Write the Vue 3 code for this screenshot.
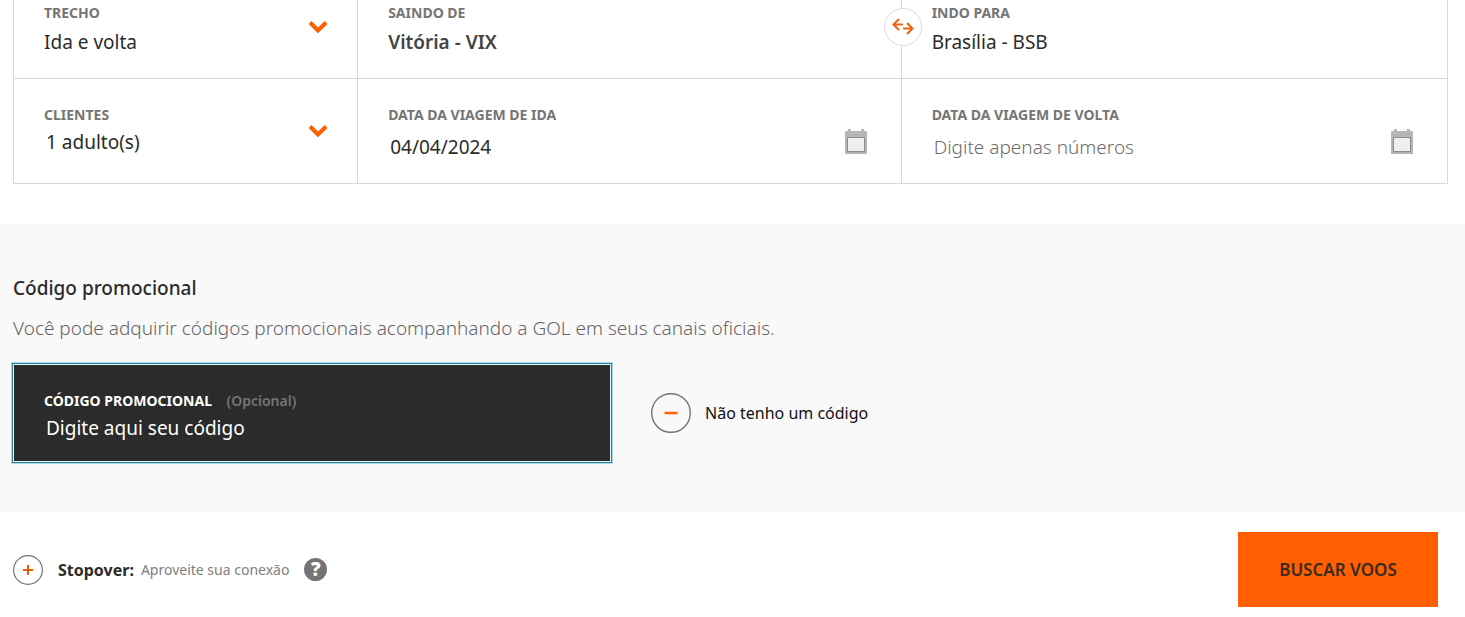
<script setup>
import { ref } from 'vue'

const trip = ref('Ida e volta')
const clients = ref('1 adulto(s)')
const origin = ref('Vitória - VIX')
const destination = ref('Brasília - BSB')
const departure = ref('04/04/2024')
const comeback = ref('')
const promo = ref('')
</script>

<template>
  <form class="page" @submit.prevent>
    <section class="search">
      <div class="cell first">
        <label for="trip">TRECHO</label>
        <select id="trip" v-model="trip"><option>Ida e volta</option><option>Somente ida</option></select>
        <svg class="chevron" viewBox="0 0 20 14"><path d="M2 2.5l8 8 8-8" /></svg>
      </div>
      <div class="cell first">
        <label for="origin">SAINDO DE</label>
        <input id="origin" v-model="origin" class="strong" type="text">
      </div>
      <div class="cell first">
        <button class="swap" type="button" aria-label="Inverter origem e destino">
          <svg viewBox="0 0 22 18"><path d="M11 6.500H2M7 1L1.500 6.500l5.500 5.500M11 10.500H20M15 5l5.500 5.500-5.500 5.500" /></svg>
        </button>
        <label for="destination">INDO PARA</label>
        <input id="destination" v-model="destination" type="text">
      </div>
      <div class="cell second clients">
        <label for="clients">CLIENTES</label>
        <select id="clients" v-model="clients"><option>1 adulto(s)</option><option>2 adulto(s)</option></select>
        <svg class="chevron" viewBox="0 0 20 14"><path d="M2 2.5l8 8 8-8" /></svg>
      </div>
      <div class="cell second date">
        <label for="departure">DATA DA VIAGEM DE IDA</label>
        <input id="departure" v-model="departure" type="text" placeholder="Digite apenas números">
        <svg class="calendar" viewBox="0 0 24 26"><path class="frame" d="M1 3q0-1 1-1h2V0h3v2h10V0h3v2h2q1 0 1 1v21q0 1-1 1H2q-1 0-1-1z" /><path class="sheet" d="M3.500 8.500h17v14h-17z" /></svg>
      </div>
      <div class="cell second date">
        <label for="comeback">DATA DA VIAGEM DE VOLTA</label>
        <input id="comeback" v-model="comeback" type="text" placeholder="Digite apenas números">
        <svg class="calendar" viewBox="0 0 24 26"><path class="frame" d="M1 3q0-1 1-1h2V0h3v2h10V0h3v2h2q1 0 1 1v21q0 1-1 1H2q-1 0-1-1z" /><path class="sheet" d="M3.500 8.500h17v14h-17z" /></svg>
      </div>
    </section>

    <section class="promo">
      <h2>Código promocional</h2>
      <p>Você pode adquirir códigos promocionais acompanhando a GOL em seus canais oficiais.</p>
      <div class="promo-row">
        <div class="code">
          <label for="promo">CÓDIGO PROMOCIONAL <span>(Opcional)</span></label>
          <input id="promo" v-model="promo" type="text" placeholder="Digite aqui seu código">
        </div>
        <button class="no-code" type="button">
          <svg viewBox="0 0 40 40"><circle cx="20" cy="20" r="19.300" stroke-width="1.4" /><path d="M13.500 20h13" stroke-width="2.5" /></svg>
          <span>Não tenho um código</span>
        </button>
      </div>
    </section>

    <footer class="actions">
      <button class="stopover" type="button">
        <svg viewBox="0 0 30 30"><circle cx="15" cy="15" r="14.400" stroke-width="1.2" /><path d="M10 15h10M15 10v10" stroke-width="2" /></svg>
        <strong>Stopover:</strong>
        <span>Aproveite sua conexão</span>
      </button>
      <button class="help" type="button" aria-label="Ajuda">?</button>
      <button class="submit" type="submit">BUSCAR VOOS</button>
    </footer>
  </form>
</template>

<style>
body { margin: 0; background: #fff; }
</style>

<style scoped>
.page, .page * { box-sizing: border-box; }
.page { font-family: "Noto Sans", sans-serif; color: #2b2b2b; }
button, input, select { font: inherit; color: inherit; background: none; border: 0; padding: 0; margin: 0; outline: 0; }
button { cursor: pointer; }
svg { display: block; flex: none; fill: none; }

.search { display: grid; grid-template-columns: 240fr 379fr 381fr; margin: 0 17px 0 13px; border-left: 1px solid #d8d8d8; }
.cell { position: relative; min-width: 0; display: flex; flex-direction: column; padding: 0 30px; border-right: 1px solid #d8d8d8; border-bottom: 1px solid #d8d8d8; }
.first { padding-top: 3px; padding-bottom: 23px; }
.second { padding-top: 26px; padding-bottom: 23px; }
.cell label { font-size: 14px; line-height: 20px; font-weight: 700; color: #757575; }
.cell input, .cell select { width: 100%; height: 26px; margin-top: 6px; font-size: 19px; line-height: 26px; appearance: none; }
.clients select { margin-top: 4px; padding-left: 2px; }
.date input { margin-top: 9px; padding-left: 2px; }
.cell .strong { font-weight: 600; color: #444; }
input::placeholder { color: #6c6c6c; opacity: 1; font-weight: 300; }
.chevron { position: absolute; right: 29px; top: 20px; width: 20px; height: 14px; stroke: #ff5f00; stroke-width: 4; pointer-events: none; }
.clients .chevron { top: 45px; }
.calendar { position: absolute; right: 33px; top: 50px; width: 24px; height: 26px; pointer-events: none; }
.frame { fill: #b5b5b5; }
.sheet { fill: #efefef; stroke: #8c8c8c; }
.swap { position: absolute; left: -18px; top: 8px; width: 38px; height: 38px; display: grid; place-items: center; border: 1px solid #dcdce0; border-radius: 50%; background: #fff; }
.swap svg { width: 22px; height: 18px; stroke: #f26110; stroke-width: 2; }

.promo { margin-top: 40px; padding: 50px 13px 49px 12px; background: #f9f9f9; }
.promo h2, .promo p { margin: 0 1px; font-size: 19px; line-height: 28px; }
.promo h2 { font-weight: 500; }
.promo p { margin-top: 12px; color: #666; font-weight: 300; }
.promo-row { display: flex; align-items: center; gap: 39px; margin-top: 21px; }
.code { width: 42%; max-width: 600px; min-width: 320px; flex: none; display: flex; flex-direction: column; padding: 26px 31px 20px; border: 1px solid #2f7f9b; outline: 1px solid #a9d8e6; box-shadow: inset 0 0 0 1px #e5f5fa; background: #2b2b2b; color: #fff; }
.code label { font-size: 14px; line-height: 22px; font-weight: 700; }
.code span { margin-left: 11px; font-weight: 600; color: #757575; }
.code input { height: 28px; margin-top: 2px; padding-left: 2px; font-size: 19px; }
.code input::placeholder { color: #fff; font-weight: 400; }
.no-code { display: flex; align-items: center; gap: 14px; font-size: 16px; line-height: 24px; color: #111; }
.no-code svg { width: 40px; height: 40px; }
circle { stroke: #757575; }
.no-code path { stroke: #ff5f00; }

.actions { display: flex; align-items: center; padding: 20px 27px 10px 13px; }
.stopover { display: flex; align-items: center; font-size: 16px; line-height: 24px; }
.stopover svg { width: 30px; height: 30px; margin-right: 15px; }
.stopover path { stroke: #e85c0c; }
.stopover span { margin-left: 7px; font-size: 14px; color: #808080; }
.help { width: 23px; height: 23px; margin-left: 15px; border-radius: 50%; background: #757575; color: #fff; font-size: 19px; line-height: 23px; font-weight: 900; }
.submit { width: 200px; height: 75px; margin-left: auto; background: #ff5f00; color: #3b2a20; font-size: 17px; font-weight: 600; }
</style>
